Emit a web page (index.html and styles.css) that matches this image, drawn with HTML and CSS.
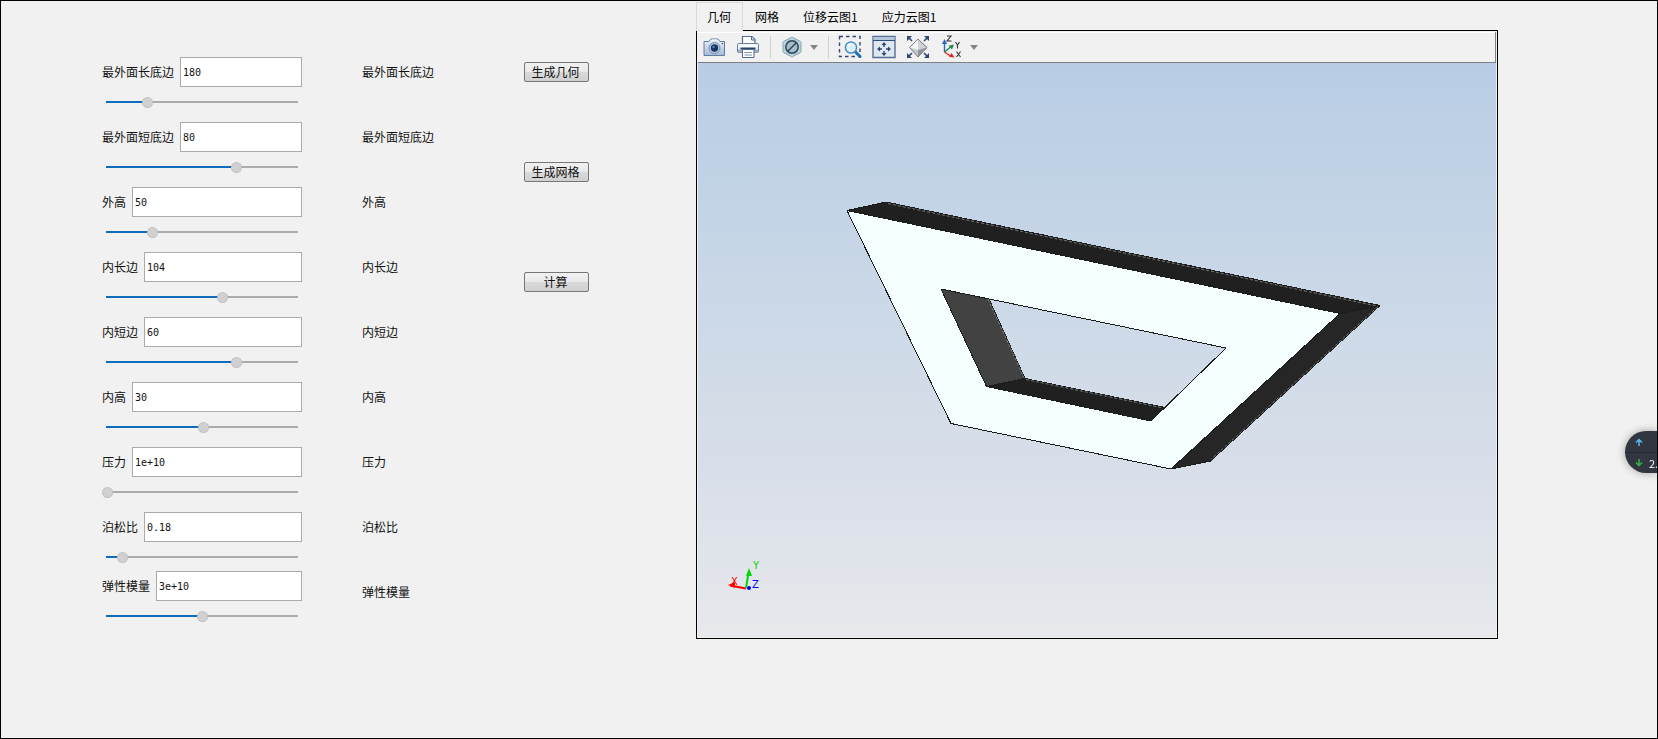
FILE: index.html
```html
<!DOCTYPE html>
<html lang="zh-CN">
<head>
<meta charset="utf-8">
<title>几何参数</title>
<link rel="stylesheet" href="styles.css">
</head>
<body>
<main class="workspace">
  <form class="params">
    <div class="param"><div class="param-row"><label for="p1">最外面长底边</label><input class="box" id="p1" type="text" value="180"></div><input class="slider" type="range" aria-label="最外面长底边" value="21" style="--v:.21"></div>
    <div class="param"><div class="param-row"><label for="p2">最外面短底边</label><input class="box" id="p2" type="text" value="80"></div><input class="slider" type="range" aria-label="最外面短底边" value="68" style="--v:.68"></div>
    <div class="param"><div class="param-row"><label for="p3">外高</label><input class="box" id="p3" type="text" value="50"></div><input class="slider" type="range" aria-label="外高" value="24" style="--v:.24"></div>
    <div class="param"><div class="param-row"><label for="p4">内长边</label><input class="box" id="p4" type="text" value="104"></div><input class="slider" type="range" aria-label="内长边" value="61" style="--v:.61"></div>
    <div class="param"><div class="param-row"><label for="p5">内短边</label><input class="box" id="p5" type="text" value="60"></div><input class="slider" type="range" aria-label="内短边" value="68" style="--v:.68"></div>
    <div class="param"><div class="param-row"><label for="p6">内高</label><input class="box" id="p6" type="text" value="30"></div><input class="slider" type="range" aria-label="内高" value="51" style="--v:.51"></div>
    <div class="param"><div class="param-row"><label for="p7">压力</label><input class="box" id="p7" type="text" value="1e+10"></div><input class="slider" type="range" aria-label="压力" value="0" style="--v:0"></div>
    <div class="param"><div class="param-row"><label for="p8">泊松比</label><input class="box" id="p8" type="text" value="0.18"></div><input class="slider" type="range" aria-label="泊松比" value="8" style="--v:.08"></div>
    <div class="param"><div class="param-row"><label for="p9">弹性模量</label><input class="box" id="p9" type="text" value="3e+10"></div><input class="slider" type="range" aria-label="弹性模量" value="50" style="--v:.5"></div>
  </form>

  <div class="names">
    <span>最外面长底边</span><span>最外面短底边</span><span>外高</span><span>内长边</span><span>内短边</span><span>内高</span><span>压力</span><span>泊松比</span><span>弹性模量</span>
  </div>

  <div class="actions">
    <button class="action" type="button">生成几何</button>
    <button class="action" type="button">生成网格</button>
    <button class="action action-solve" type="button">计算</button>
  </div>

  <section class="viewer">
    <div class="tabs" role="tablist">
      <button class="tab tab-active" type="button" role="tab" aria-selected="true">几何</button>
      <button class="tab" type="button" role="tab">网格</button>
      <button class="tab" type="button" role="tab">位移云图1</button>
      <button class="tab" type="button" role="tab">应力云图1</button>
    </div>
    <div class="panel">
      <div class="toolbar">
        <button class="tool" type="button" aria-label="截图">
          <svg viewBox="0 0 24 24"><defs><linearGradient id="cam" x2="0" y2="1"><stop stop-color="#edf3fa"/><stop offset="1" stop-color="#a5b9d3"/></linearGradient></defs><path d="M2 6.5h5l2-2.5h7l2 2.500h4.500v14h-20.500z" fill="url(#cam)" stroke="#5f7da5"/><path d="M9.500 5h6" stroke="#fff"/><circle cx="12.500" cy="13" r="5.500" fill="#b9cbe0" stroke="#6f8db5"/><circle cx="12.500" cy="13" r="3.700" fill="#173463"/><circle cx="11.500" cy="12" r="1.300" fill="#5679a9"/><circle cx="20.500" cy="8.500" r=".7" fill="#26436f"/></svg>
        </button>
        <button class="tool" type="button" aria-label="打印">
          <svg viewBox="0 0 24 24"><path d="M6.500 8.500v-7h9.500l3 3v4" fill="#fff" stroke="#536b8e" stroke-width="1.200"/><path d="M15.500 1.500v3.500h3.500" fill="#ccd7e5" stroke="#536b8e"/><rect x="1.500" y="8.500" width="21" height="9" rx="1" fill="#e9eff6" stroke="#6a7e9b"/><path d="M2 14.500h20v3H2z" fill="#9eafc6"/><path d="M4 9.500h16v3H4z" fill="#fff"/><path d="M4.500 13.500h15" stroke="#27456f" stroke-width="2"/><path d="M6.500 14.500h11.500v8H6.500z" fill="#fff" stroke="#536b8e"/><path d="M8.500 17.500h7.500M8.500 20h7.500" stroke="#7590b5"/></svg>
        </button>
        <span class="divider"></span>
        <button class="tool" type="button" aria-label="选择过滤">
          <svg viewBox="0 0 24 24"><path d="M12 2l9 4.800v10.400L12 22l-9-4.800V6.800z" fill="#b9d0d6" stroke="#83a5b0"/><path d="M12 2v20M3 7l18 10M21 7L3 17" stroke="#d8e6e9" stroke-width=".7"/><circle cx="12" cy="12" r="6.200" fill="#a5bfc8" stroke="#29475c" stroke-width="1.500"/><path d="M16.500 7.500l-9 9" stroke="#29475c" stroke-width="1.500"/></svg>
        </button>
        <span class="caret"></span>
        <span class="divider"></span>
        <button class="tool" type="button" aria-label="框选缩放">
          <svg viewBox="0 0 24 24"><path d="M1.500 1.500h20.500v20H1.500z" fill="none" stroke="#35466f" stroke-width="1.400" stroke-dasharray="3.500 3"/><path d="M17 16.500l5 5" stroke="#1b72b5" stroke-width="3" stroke-linecap="round"/><circle cx="13" cy="12.500" r="5.600" fill="#dceefa" stroke="#4b8fc0" stroke-width="1.500"/><path d="M10 11a3.500 3.500 0 0 1 3-2" fill="none" stroke="#fff" stroke-width="1.500"/></svg>
        </button>
        <button class="tool" type="button" aria-label="适合窗口">
          <svg viewBox="0 0 24 24"><path d="M1 1.500h22v21H1z" fill="#dfe7f0" stroke="#556f97" stroke-width="1.400"/><path d="M1.500 2h21v3h-21z" fill="#b5c5da"/><path d="M1 5.500h22" stroke="#314f7c"/><path d="M12 7l2.500 3h-5zM12 21l2.500-3h-5zM5 14l3-2.500v5zM19 14l-3-2.500v5z" fill="#2d456f"/><path d="M12 9v3M12 16v3M7 14h3M14 14h3" stroke="#2d456f" stroke-width="1.400"/></svg>
        </button>
        <button class="tool" type="button" aria-label="全部显示">
          <svg viewBox="0 0 24 24"><path d="M12 4v18L3.500 12.500z" fill="#c3c7cc"/><path d="M12 4l9 8.500-9 9.500z" fill="#8f959e"/><path d="M12 4v11l-8.500-2.500z" fill="#f3f4f5"/><path d="M12 4l9 8.500-9 2.500z" fill="#cfd2d6"/><path d="M12 4l9 8.500-9 9.500-8.500-9.500z" fill="none" stroke="#777e89"/><path d="M6 6L3 3M18 6l3-3M6 18l-3 3M18 18l3 3" stroke="#2d456f" stroke-width="1.600"/><path d="M1 1h5L1 6zM23 1h-5l5 5zM1 23v-5l5 5zM23 23h-5l5-5z" fill="#2d456f"/></svg>
        </button>
        <button class="tool" type="button" aria-label="坐标视图">
          <svg viewBox="0 0 24 24"><g fill="none" stroke-width="1.400"><path d="M4.500 17V7" stroke="#2469bd"/><path d="M4.500 17l6-5" stroke="#228a45"/><path d="M4.500 17l6 4" stroke="#e22424"/></g><path d="M4.500 4L2 9h5z" fill="#2469bd"/><path d="M14 9.500l-5.500 1.300 3.500 3.700z" fill="#228a45"/><path d="M14.500 22.500l-3-4.500-2.500 4z" fill="#e22424"/><g fill="none" stroke="#333" stroke-width="1.100"><path d="M7 1h4L7 6h4.500"/><path d="M15.500 7l2 3 2-3M17.500 10v3.500"/><path d="M16.500 16.500l4 5.500M20.500 16.500l-4 5.500"/></g></svg>
        </button>
        <span class="caret"></span>
      </div>
      <svg class="scene" viewBox="0 0 798 574" role="img" aria-label="几何模型">
        <g shape-rendering="crispEdges" stroke="#1c1c1c" stroke-width="1" stroke-linejoin="bevel">
          <path d="M149 147.500L188 139L682 242.500L642 250.500z" fill="#202020"/>
          <path d="M642 250.500L682 242.500L512.500 398L473 406z" fill="#262626"/>
          <path d="M243 226L291 236L327 315.500L288.500 323.500z" fill="#424242"/>
          <path d="M288.500 323.500L327 315.500L467 344.500L453 358z" fill="#202020"/>
          <path d="M149 147.500L642 250.500L473 406L253 360.500zM243 226L288.500 323.500L453 358L528 285z" fill="#f6ffff" fill-rule="evenodd"/>
        </g>
        <g fill="none" stroke="#c9cdd0" stroke-width=".5" stroke-dasharray="3 2">
          <path d="M190 140.500L679 243M290 236L326 314.500M328 316.500L465 345"/>
          <path d="M680 243.500L513 396.500"/>
        </g>
        <g fill="none">
          <path d="M48 525.500L32 522.500" stroke="#f00" stroke-width="2"/><path d="M30 522l7-3v6z" fill="#f00"/>
          <path d="M48 525L50.500 510" stroke="#00d800" stroke-width="2"/><path d="M51 505l3 8h-6z" fill="#00d800"/>
          <circle cx="51" cy="525" r="2" fill="#00f"/>
        </g>
        <g class="axis-text"><text x="33" y="522" fill="#f00">X</text><text x="55" y="506" fill="#00d800">Y</text><text x="54" y="525" fill="#00f">Z</text></g>
      </svg>
    </div>
  </section>
</main>
<aside class="netmeter">
  <div class="rate"><svg viewBox="0 0 8 8"><path d="M4 8V1.500M1 4.500L4 1.500l3 3" fill="none" stroke="#58b8f5" stroke-width="1.500"/></svg></div>
  <div class="rate"><svg viewBox="0 0 8 8"><path d="M4 0v6.500M1 3.500l3 3 3-3" fill="none" stroke="#32b544" stroke-width="1.500"/></svg><span>2.</span></div>
</aside>
</body>
</html>
```
FILE: styles.css
```css
* { box-sizing: border-box; }

body {
  margin: 0;
  min-height: 100vh;
  border: 1px solid #000;
  background: #f1f1f1;
  color: #111;
  font: 12px/16px "Noto Sans CJK SC", sans-serif;
}

button, input { font: inherit; color: inherit; margin: 0; }

.workspace {
  display: grid;
  grid-template-columns: 200px 102px 112px minmax(0, 1fr);
  column-gap: 60px;
  align-items: start;
  padding: 0 159px 0 101px;
}

.params {
  display: flex;
  flex-direction: column;
  gap: 5px;
  padding-top: 56px;
}
.param:last-child { margin-top: -6px; }
.param-row { display: flex; align-items: center; gap: 6px; }
.param-row label { flex: none; }

.box {
  flex: 1;
  min-width: 0;
  height: 30px;
  padding: 0 2px;
  border: 1px solid #ababab;
  background: #fff;
  font: 10px "DejaVu Sans Mono", monospace;
}

.slider {
  display: block;
  appearance: none;
  width: 100%;
  height: 30px;
  background:
    linear-gradient(#0f6cbd, #0f6cbd) 4px center / calc((100% - 10px) * var(--v)) 2px no-repeat,
    linear-gradient(#ababab, #ababab) center / calc(100% - 8px) 2px no-repeat;
}
.slider::-webkit-slider-thumb {
  appearance: none;
  width: 11px;
  height: 11px;
  border: 1px dotted #b2b2b2;
  border-radius: 50%;
  background: #d0d0d0;
}

.names { display: flex; flex-direction: column; gap: 49px; padding-top: 63px; }

.actions { display: flex; flex-direction: column; align-items: flex-start; padding-top: 61px; }
.action {
  width: 65px;
  height: 20px;
  padding: 0 2px 0 0;
  border: 1px solid #777;
  border-radius: 2px;
  background: linear-gradient(#f0f0f0, #e9e9e9 50%, #dadada 50%, #d0d0d0);
  line-height: 16px;
}
.action + .action { margin-top: 80px; }
.action + .action-solve { margin-top: 90px; }

.viewer { padding-top: 1px; }
.tabs { display: flex; position: relative; z-index: 1; }
.tab {
  height: 29px;
  padding: 0 12px;
  border: 0;
  background: none;
  color: #000;
}
.tab-active {
  padding: 0 11px 0 10px;
  border: 1px solid #d9d9d9;
  border-bottom: 0;
  background: #f1f1f1;
}

.panel { margin-top: -1px; padding: 1px; border: 1px solid #000; }

.toolbar {
  display: flex;
  align-items: center;
  gap: 10px;
  height: 31px;
  padding-left: 4px;
  border: solid #808080;
  border-width: 0 1px 1px 0;
  box-shadow: inset 0 1px #fff;
}
.tool { width: 24px; height: 24px; padding: 0; border: 0; background: none; }
.tool svg { display: block; width: 24px; height: 24px; }
.divider { width: 1px; height: 22px; margin: 0 -1px 0 0; background: #d0d0d0; }
.caret {
  margin-left: -4px;
  border: 4px solid transparent;
  border-top: 5px solid #858585;
  border-bottom: 0;
}

.scene {
  display: block;
  width: 100%;
  height: auto;
  background: linear-gradient(#b8cde5, #d3dde8 60%, #d8dee9 70%, #e7e9ec);
}
.axis-text { font: 10px "DejaVu Sans", sans-serif; }

.netmeter {
  position: fixed;
  right: 1px;
  top: 431px;
  width: 32px;
  height: 42px;
  overflow: hidden;
  border-radius: 21px 0 0 21px;
  background: #323640;
  box-shadow: 0 0 8px #0005;
  color: #fff;
  font-size: 11px;
}
.rate { display: flex; align-items: center; gap: 6px; height: 21px; padding-left: 10px; }
.rate + .rate { border-top: 1px solid #242830; }
.rate svg { flex: none; width: 8px; height: 8px; }
```
